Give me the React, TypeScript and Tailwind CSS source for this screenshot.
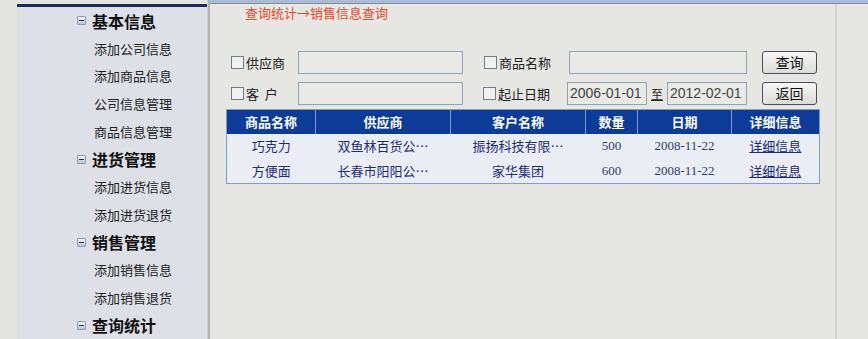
import React from 'react';

const cjk = { fontFamily: '"Noto Sans CJK SC", "Noto Sans", sans-serif' };

const menu = [
  { title: '基本信息', items: ['添加公司信息', '添加商品信息', '公司信息管理', '商品信息管理'] },
  { title: '进货管理', items: ['添加进货信息', '添加进货退货'] },
  { title: '销售管理', items: ['添加销售信息', '添加销售退货'] },
  { title: '查询统计', items: [] },
];

const rows = [
  { name: '巧克力', supplier: '双鱼林百货公…', customer: '振扬科技有限…', qty: '500', date: '2008-11-22' },
  { name: '方便面', supplier: '长春市阳阳公…', customer: '家华集团', qty: '600', date: '2008-11-22' },
];

const MinusBox = () => (
  <span className="flex h-[9px] w-[9px] items-center justify-center rounded-[1px] border border-[#8d9bb0] bg-gradient-to-b from-[#f4f6fa] to-[#b9c4d6]">
    <span className="h-[1px] w-[5px] bg-[#2c3440]" />
  </span>
);

const CheckBox = () => <span className="h-[13px] w-[13px] shrink-0 border border-[#6f7f8f] bg-[#f1f1ef]" />;

const Field = ({ className = '', children }: { className?: string; children?: React.ReactNode }) => (
  <div className={`flex h-[23px] items-center border border-[#8fa2b8] bg-[#e9e9e6] px-[2px] text-[14px] text-[#444] ${className}`} style={{ fontFamily: '"Liberation Sans", Arial, sans-serif' }}>
    {children}
  </div>
);

const Button = ({ label }: { label: string }) => (
  <div className="flex h-[23px] w-[55px] items-center justify-center rounded-[3px] border border-[#4a4f57] bg-gradient-to-b from-[#f6f6f4] to-[#dcdcd8] text-[14px] text-[#111]">
    {label}
  </div>
);

export default function App() {
  return (
    <div className="flex h-[339px] w-[868px] overflow-hidden bg-[#e4e4e1]" style={cjk}>
      <div className="w-[17px] shrink-0" />
      <div className="flex w-[190px] shrink-0 flex-col pt-[4px]">
        <div className="flex flex-1 flex-col border-t-[3px] border-[#1c2a5e] bg-[#dde0e7]">
          {menu.map(group => (
            <React.Fragment key={group.title}>
              <div className="flex h-[27.7px] items-center gap-[6px] pl-[60px]">
                <MinusBox />
                <span className="text-[16px] font-bold text-[#111]">{group.title}</span>
              </div>
              {group.items.map(item => (
                <div key={item} className="flex h-[27.7px] items-center pl-[77px] text-[13px] text-[#222]">
                  {item}
                </div>
              ))}
            </React.Fragment>
          ))}
        </div>
      </div>
      <div className="w-[1px] shrink-0 bg-[#cfcfcf]" />
      <div className="w-[2px] shrink-0 bg-[#b3b3b3]" />
      <div className="flex flex-1 flex-col">
        <div className="h-[3px] bg-[#aabdd8]" />
        <div className="h-[1px] bg-[#8a8a86]" />
        <div className="flex flex-1">
          <div className="w-[625px] shrink-0 bg-[#e6e6e2] pl-[16px]">
            <div className="pl-[19px] text-[13px] leading-[18px] text-[#ec4a2e]">查询统计→销售信息查询</div>
            <div className="mt-[29px] flex flex-col gap-[8px] pl-[5px] text-[13px] text-[#222]">
              <div className="flex items-center">
                <div className="flex w-[67px] items-center gap-[2px]">
                  <CheckBox />
                  <span>供应商</span>
                </div>
                <Field className="w-[165px]" />
                <div className="ml-[21px] flex w-[85px] items-center gap-[2px]">
                  <CheckBox />
                  <span>商品名称</span>
                </div>
                <Field className="w-[178px]" />
                <div className="ml-[15px]">
                  <Button label="查询" />
                </div>
              </div>
              <div className="flex items-center">
                <div className="flex w-[67px] items-center gap-[2px]">
                  <CheckBox />
                  <span>客&nbsp;&nbsp;户</span>
                </div>
                <Field className="w-[165px]" />
                <div className="ml-[20px] flex w-[84px] items-center gap-[2px]">
                  <CheckBox />
                  <span>起止日期</span>
                </div>
                <Field className="w-[80px]">2006-01-01</Field>
                <span className="mx-[4px] text-[12px] leading-[14px] underline">至</span>
                <Field className="w-[80px]">2012-02-01</Field>
                <div className="ml-[15px]">
                  <Button label="返回" />
                </div>
              </div>
            </div>
            <table className="mt-[4px] w-[593px] table-fixed border-collapse border border-[#7f9bcf] text-[13px]">
              <colgroup>
                <col className="w-[89px]" />
                <col className="w-[135px]" />
                <col className="w-[135px]" />
                <col className="w-[52px]" />
                <col className="w-[94px]" />
                <col className="w-[88px]" />
              </colgroup>
              <thead>
                <tr className="h-[24px] bg-[#0c3c98] text-white">
                  {['商品名称', '供应商', '客户名称', '数量', '日期', '详细信息'].map(h => (
                    <th key={h} className="border-x border-[#7d98cf] p-0 text-[13px] font-bold">{h}</th>
                  ))}
                </tr>
              </thead>
              <tbody className="bg-[#eaedf4] text-[#1d2c7c]">
                {rows.map(r => (
                  <tr key={r.name} className="h-[25px] text-center">
                    <td className="p-0">{r.name}</td>
                    <td className="p-0">{r.supplier}</td>
                    <td className="p-0">{r.customer}</td>
                    <td className="p-0 text-[#333c6a]" style={{ fontFamily: '"Liberation Serif", serif' }}>{r.qty}</td>
                    <td className="p-0 text-[#333c6a]" style={{ fontFamily: '"Liberation Serif", serif' }}>{r.date}</td>
                    <td className="p-0">
                      <span className="text-[#1b2a78] underline">详细信息</span>
                    </td>
                  </tr>
                ))}
              </tbody>
            </table>
          </div>
          <div className="w-[2px] shrink-0 bg-[#d2d2ce]" />
          <div className="flex-1 bg-[#e6e6e3]" />
        </div>
      </div>
    </div>
  );
}
